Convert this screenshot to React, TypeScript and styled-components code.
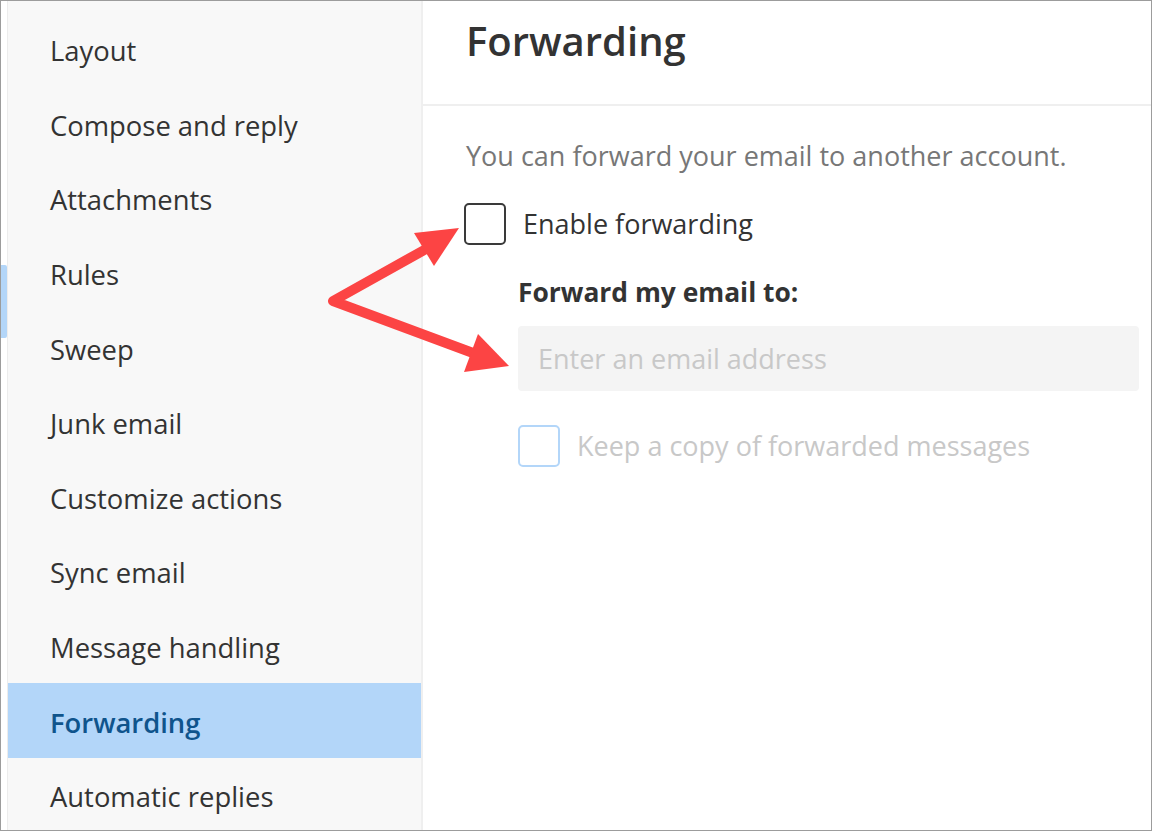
import React from 'react';
import styled, { createGlobalStyle } from 'styled-components';

const GlobalStyle = createGlobalStyle`
    html, body {
        margin: 0;
        padding: 0;
        background: #ffffff;
    }
    body {
        font-family: "Open Sans", "Noto Sans", "Liberation Sans", sans-serif;
        color: #333333;
    }
    * {
        box-sizing: border-box;
    }
`;

const Frame = styled.div`
    position: relative;
    width: 1152px;
    height: 831px;
    border: 1px solid #9c9c9c;
    display: flex;
    overflow: hidden;
    background: #ffffff;
`;

const ScrollStrip = styled.div`
    width: 7px;
    flex-shrink: 0;
    border-right: 1px solid #ececec;
    padding-top: 264px;
`;

const ScrollThumb = styled.div`
    width: 6px;
    height: 73px;
    background: #b3d6f9;
    border-radius: 0 2px 2px 0;
`;

const Sidebar = styled.nav`
    width: 415px;
    flex-shrink: 0;
    background: #f8f8f8;
    border-right: 2px solid #efefef;
    padding-top: 11px;
    display: flex;
    flex-direction: column;
`;

const NavItem = styled.div<{ $active?: boolean }>`
    height: 74.6px;
    flex-shrink: 0;
    display: flex;
    align-items: center;
    padding-left: 42px;
    padding-top: 3px;
    font-size: 27.4px;
    white-space: nowrap;
    color: ${p => (p.$active ? '#0f548c' : '#333333')};
    font-weight: ${p => (p.$active ? 600 : 400)};
    background: ${p => (p.$active ? '#b3d6f9' : 'transparent')};
`;

const Main = styled.main`
    flex: 1;
    display: flex;
    flex-direction: column;
`;

const Header = styled.header`
    height: 105px;
    border-bottom: 2px solid #efefef;
    padding: 10px 0 0 43px;
`;

const Title = styled.h1`
    margin: 0;
    font-size: 40px;
    font-weight: 600;
    color: #333333;
    line-height: 60px;
`;

const Body = styled.section`
    padding: 30px 0 0 43px;
    display: flex;
    flex-direction: column;
`;

const Description = styled.p`
    margin: 0;
    font-size: 27px;
    line-height: 40px;
    color: #777777;
`;

const CheckRow = styled.label<{ $indent?: number }>`
    display: flex;
    align-items: center;
    gap: 17px;
    margin-left: ${p => p.$indent ?? 0}px;
    font-size: 27px;
    line-height: 42px;
`;

const Box = styled.span<{ $disabled?: boolean }>`
    width: 42px;
    height: 42px;
    flex-shrink: 0;
    border: 2px solid ${p => (p.$disabled ? '#b3d6f9' : '#3a3a3a')};
    border-radius: 5px;
    background: #ffffff;
`;

const CheckLabel = styled.span<{ $disabled?: boolean }>`
    color: ${p => (p.$disabled ? '#c8c8c8' : '#333333')};
`;

const Field = styled.div`
    margin-left: 52px;
    display: flex;
    flex-direction: column;
    width: 621px;
`;

const FieldLabel = styled.div`
    font-size: 26.4px;
    font-weight: 700;
    color: #333333;
    line-height: 40px;
    margin: 27px 0 14px 0;
`;

const EmailInput = styled.input`
    height: 65px;
    width: 100%;
    border: none;
    outline: none;
    border-radius: 4px;
    background: #f4f4f4;
    padding: 0 20px;
    font-family: inherit;
    font-size: 27px;
    color: #333333;
    &::placeholder {
        color: #c8c8c8;
    }
`;

const Overlay = styled.svg`
    position: absolute;
    left: 0;
    top: 0;
    pointer-events: none;
`;

const items = [
    'Layout',
    'Compose and reply',
    'Attachments',
    'Rules',
    'Sweep',
    'Junk email',
    'Customize actions',
    'Sync email',
    'Message handling',
    'Forwarding',
    'Automatic replies',
];

const Arrows = () => (
    <Overlay width="1152" height="831" viewBox="0 0 1152 831">
        <path
            d="M425 248 L332 300 L472 352"
            fill="none"
            stroke="#fc4444"
            strokeWidth="10"
            strokeLinejoin="round"
        />
        <polygon points="458,227 413,232 433,265" fill="#fc4444" />
        <polygon points="508,365 477,333 463,371" fill="#fc4444" />
    </Overlay>
);

const App = () => {
    return (
        <>
            <GlobalStyle />
            <Frame>
                <ScrollStrip>
                    <ScrollThumb />
                </ScrollStrip>
                <Sidebar>
                    {items.map(item => (
                        <NavItem key={item} $active={item === 'Forwarding'}>
                            {item}
                        </NavItem>
                    ))}
                </Sidebar>
                <Main>
                    <Header>
                        <Title>Forwarding</Title>
                    </Header>
                    <Body>
                        <Description>You can forward your email to another account.</Description>
                        <CheckRow $indent={-2} style={{ marginTop: 27 }}>
                            <Box />
                            <CheckLabel>Enable forwarding</CheckLabel>
                        </CheckRow>
                        <Field>
                            <FieldLabel>Forward my email to:</FieldLabel>
                            <EmailInput placeholder="Enter an email address" disabled />
                        </Field>
                        <CheckRow $indent={52} style={{ marginTop: 34 }}>
                            <Box $disabled />
                            <CheckLabel $disabled>Keep a copy of forwarded messages</CheckLabel>
                        </CheckRow>
                    </Body>
                </Main>
                <Arrows />
            </Frame>
        </>
    );
};

export default App;
